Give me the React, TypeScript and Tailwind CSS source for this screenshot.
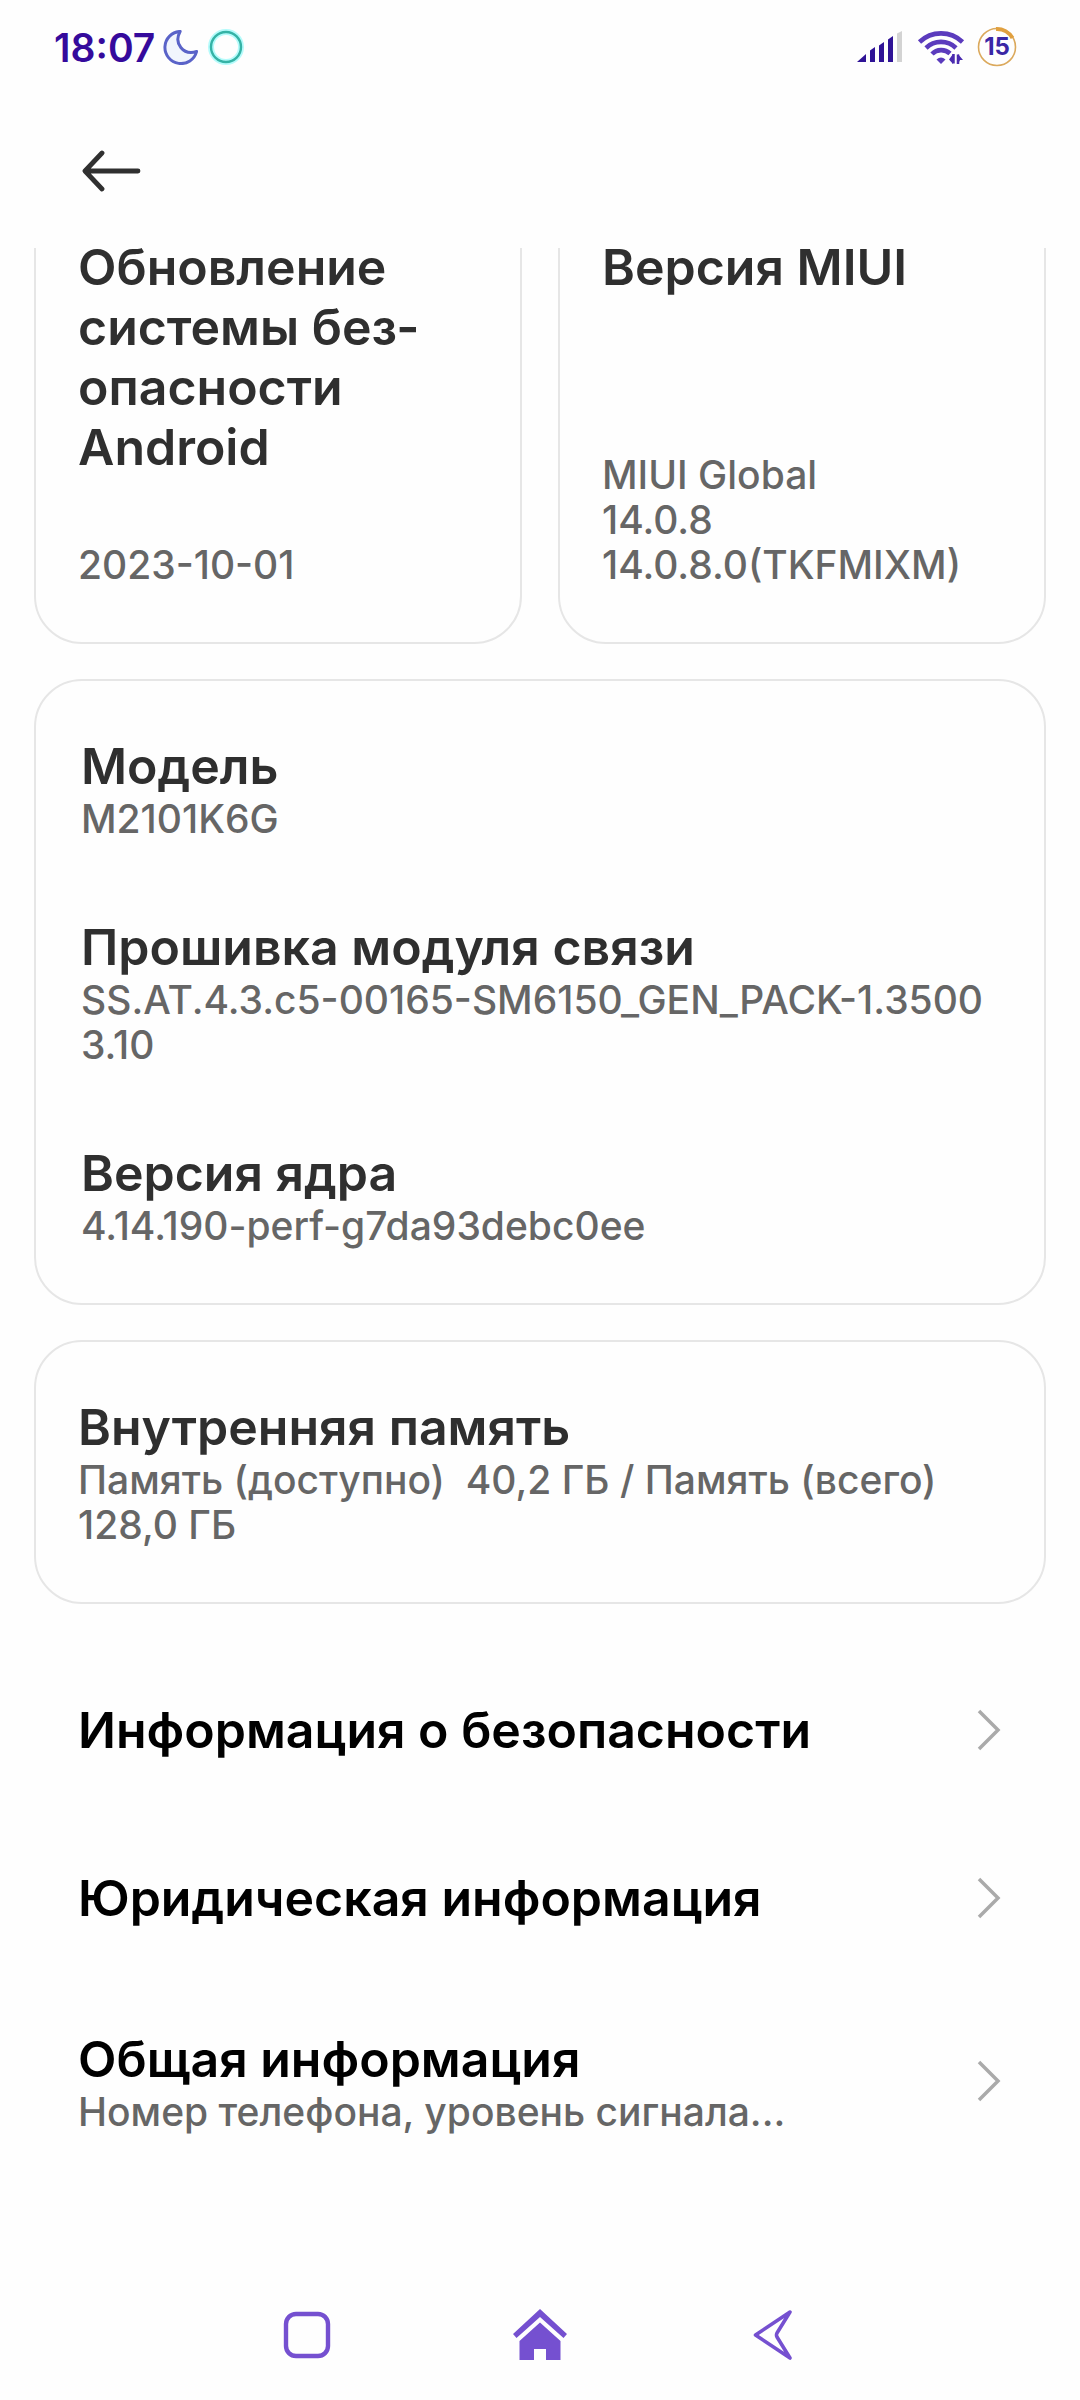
import { ReactNode } from "react"

const specs = [
  { label: "Модель", value: "M2101K6G" },
  { label: "Прошивка модуля связи", value: "SS.AT.4.3.c5-00165-SM6150_GEN_PACK-1.3500\u200b3.10" },
  { label: "Версия ядра", value: "4.14.190-perf-g7da93debc0ee" },
]

const links = [
  { title: "Информация о безопасности", height: "h-[168px]" },
  { title: "Юридическая информация", height: "h-[168px]" },
  { title: "Общая информация", note: "Номер телефона, уровень сигнала...", height: "h-[198px]" },
]

function StatusBar() {
  return (
    <div className="flex items-center justify-between h-[94px] pl-[54px] pr-[61px] text-[#350a9c]">
      <div className="flex items-center">
        <span className="text-[39px] leading-none font-semibold">18:07</span>
        <svg className="ml-2 size-[35px]" viewBox="2 2 20 20" fill="#f1f5fd" stroke="#5a63c8" strokeWidth="1.700" strokeLinejoin="round">
          <path d="M11.800 2.800A9.200 9.200 0 1 0 21.200 14.300C13.500 16.800 8 9.500 11.800 2.800z" />
        </svg>
        <svg className="ml-2 size-[40px]" viewBox="0 0 40 40" fill="none">
          <circle cx="20" cy="20" r="15" stroke="#b5fbfb" strokeWidth="6" />
          <circle cx="20" cy="20" r="15" stroke="#35b3a6" strokeWidth="2.400" />
        </svg>
      </div>
      <div className="flex items-center">
        <svg className="w-[46px] h-[34px]" viewBox="0 0 46 34" fill="#2f1396">
          <path d="M0 32 9 24v8z" />
          <path d="M13 20.500 18 17v15h-5z" />
          <path d="M22 15.500 27 12v20h-5z" />
          <path d="M31 9.500 36 6v26h-5z" />
          <path d="M40 3.500 45 1v31h-5z" fill="#d3d3d3" />
        </svg>
        <svg className="ml-3.5 w-[48px] h-[36px]" viewBox="0 0 48 36" fill="none" stroke="#5b3bbd" strokeWidth="4.600">
          <path d="M2.500 13a31 31 0 0 1 43 0" />
          <path d="M9 19a21.500 21.500 0 0 1 30 0" />
          <path d="M15 25a13 13 0 0 1 18-.5" />
          <path d="M19.500 30.500q4.500-4 9 0L24 35z" fill="#5b3bbd" stroke="none" />
          <path d="M32 30.500 36 25v10zM41 35V25l5 6h-3z" fill="#4b2bb0" stroke="none" />
          <path d="M36.500 25v9.500M41 25.500v9.500" stroke="#4b2bb0" strokeWidth="2.500" />
        </svg>
        <div className="relative ml-2.5 flex items-center justify-center size-[44px]">
          <svg className="absolute inset-0" viewBox="0 0 44 44" fill="none">
            <circle cx="22" cy="22" r="18.500" stroke="#dba95c" strokeWidth="1.600" />
            <path d="M21 4a18 18 0 0 1 16.500 9" stroke="#e0a040" strokeWidth="4" />
          </svg>
          <span className="text-[24px] leading-none font-bold text-[#3a27a5]">15</span>
        </div>
      </div>
    </div>
  )
}

function Card({ children, className = "" }: { children: ReactNode; className?: string }) {
  return (
    <section className={`flex flex-col border-2 border-[#e6e6e6] rounded-[48px] py-[55px] ${className}`}>
      {children}
    </section>
  )
}

function Title({ children }: { children: ReactNode }) {
  return <h2 className="text-[50px] leading-[60px] font-semibold text-[#2f2f2f]">{children}</h2>
}

function Value({ children }: { children: ReactNode }) {
  return <p className="text-[39px] leading-[45px] font-medium text-[#666]">{children}</p>
}

function Chevron() {
  return (
    <svg className="shrink-0 w-6 h-[42px]" viewBox="0 0 24 42" fill="none" stroke="#aaa" strokeWidth="3.500">
      <path d="M2 2 21 21 2 40" />
    </svg>
  )
}

function NavBar() {
  return (
    <nav className="grid grid-cols-3 items-center h-[130px] px-[190px] text-[#7550d0]">
      <button aria-label="Недавние" className="flex justify-center">
        <svg className="size-[52px]" viewBox="0 0 52 52" fill="none" stroke="currentColor" strokeWidth="4.400">
          <rect x="5" y="5" width="42" height="42" rx="10" />
        </svg>
      </button>
      <button aria-label="Домой" className="flex justify-center">
        <svg className="w-[54px] h-[52px]" viewBox="0 0 54 52" fill="currentColor">
          <path d="M27 0 54 25l-3.500 4L27 8 3.500 29 0 25z" />
          <path d="M27 13.500 47.500 32v19H33V40H21v11H6.500V32z" />
        </svg>
      </button>
      <button aria-label="Назад" className="flex justify-center">
        <svg className="w-[40px] h-[52px]" viewBox="0 0 40 52" fill="none" stroke="currentColor" strokeWidth="3.600" strokeLinejoin="round">
          <path d="M37 3 2.500 26 37 49 24 28q-1-2 0-4z" />
        </svg>
      </button>
    </nav>
  )
}

export default function App() {
  return (
    <div lang="ru" className="flex flex-col min-h-screen bg-[#fefefe] font-['Inter',sans-serif]">
      <StatusBar />
      <header className="flex items-center h-[154px] pl-[82px]">
        <button aria-label="Назад">
          <svg className="w-[60px] h-[42px]" viewBox="0 0 60 42" fill="none" stroke="#303030" strokeWidth="4.800" strokeLinecap="round" strokeLinejoin="round">
            <path d="M20 3 3 21l17 18M4 21h52" />
          </svg>
        </button>
      </header>

      <main className="flex-1 overflow-hidden">
        {/* scrolled a little, so the first row runs under the header */}
        <div className="flex flex-col gap-[35px] px-[34px] -mt-[68px]">
          <div className="grid grid-cols-2 gap-9">
            <Card className="justify-between gap-[65px] px-[42px]">
              <Title>Обновление системы без&shy;опасности Android</Title>
              <Value>2023-10-01</Value>
            </Card>
            <Card className="justify-between gap-[65px] px-[42px]">
              <Title>Версия MIUI</Title>
              <Value>
                MIUI Global
                <br />
                14.0.8
                <br />
                14.0.8.0(TKFMIXM)
              </Value>
            </Card>
          </div>

          <Card className="gap-[76px] px-[45px]">
            {specs.map((s) => (
              <div key={s.label}>
                <Title>{s.label}</Title>
                <Value>{s.value}</Value>
              </div>
            ))}
          </Card>

          <Card className="px-[42px]">
            <Title>Внутренняя память</Title>
            <Value>Память (доступно)&nbsp; 40,2 ГБ / Память (всего) 128,0 ГБ</Value>
          </Card>
        </div>

        <div className="mt-[42px]">
          {links.map((l) => (
            <a key={l.title} href="#" className={`flex items-center justify-between pl-[78px] pr-[79px] ${l.height}`}>
              <div>
                <div className="text-[50px] leading-[60px] font-semibold text-black">{l.title}</div>
                {l.note && <Value>{l.note}</Value>}
              </div>
              <Chevron />
            </a>
          ))}
        </div>
      </main>

      <NavBar />
    </div>
  )
}
